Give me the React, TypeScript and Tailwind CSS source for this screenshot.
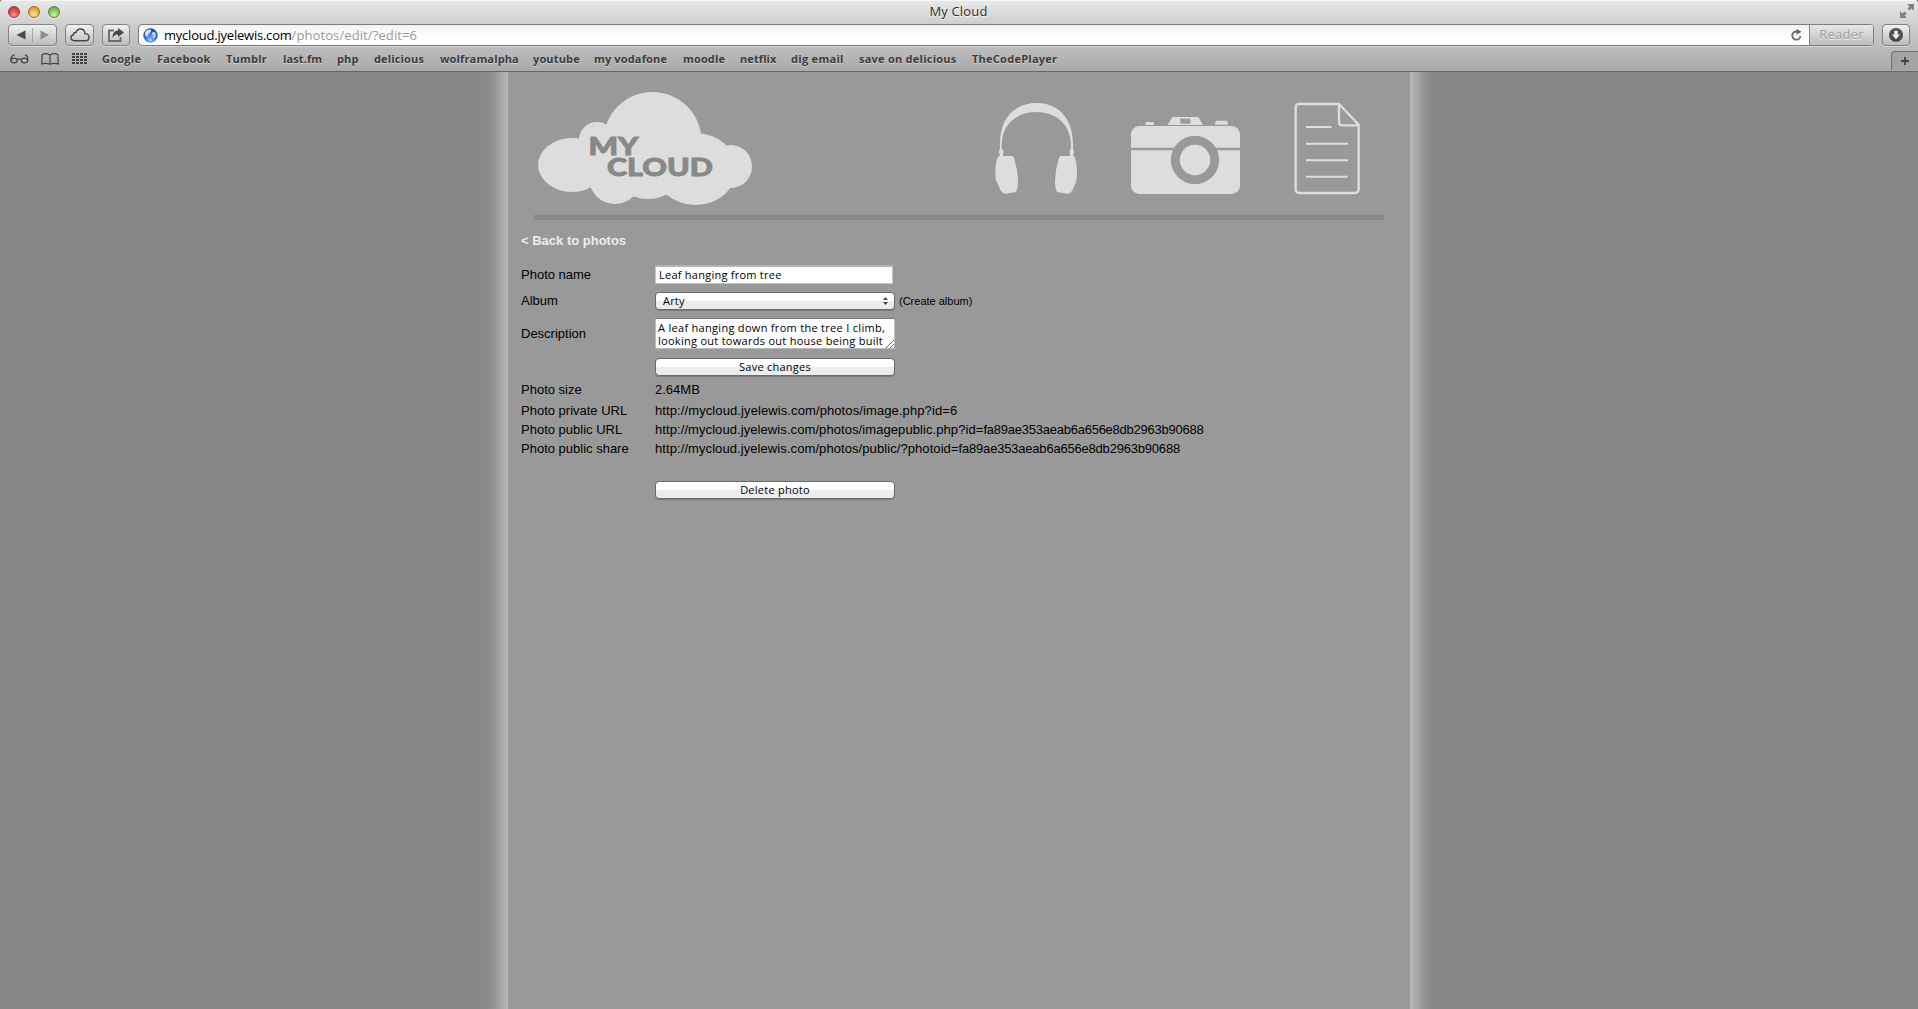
import type { ReactNode } from "react";

const ui = "font-['Open_Sans','Noto_Sans',sans-serif]";
const arial = "font-['Liberation_Sans',Arial,sans-serif]";
const toolButton =
  "flex h-[22px] items-center justify-center rounded-[4px] border border-[#858585] bg-linear-to-b from-[#f0f0f0] to-[#bcbcbc] shadow-[0_1px_0_#d4d4d4]";

const bookmarks: [string, string][] = [
  ["Google", "w-[39px] tracking-[0.25px]"],
  ["Facebook", "w-[53px] tracking-[0.15px]"],
  ["Tumblr", "w-[41px] tracking-[0.2px]"],
  ["last.fm", "w-[38px] tracking-[0.1px]"],
  ["php", "w-[21px] tracking-[0.15px]"],
  ["delicious", "w-[50px] tracking-[0.15px]"],
  ["wolframalpha", "w-[77px] tracking-[0.15px]"],
  ["youtube", "w-[45px] tracking-[0.15px]"],
  ["my vodafone", "w-[73px] tracking-[0.15px]"],
  ["moodle", "w-[41px] tracking-[0.15px]"],
  ["netflix", "w-[35px] tracking-[0.1px]"],
  ["dig email", "w-[52px] tracking-[0.3px]"],
  ["save on delicious", "w-[97px] tracking-[0.25px]"],
  ["TheCodePlayer", "w-[86px] tracking-[0.25px]"],
];

function Light({ color }: { color: string }) {
  return <span className={`h-3 w-3 rounded-full border shadow-[0_1px_0_#eee] ${color}`} />;
}

function TitleBar() {
  return (
    <div className="flex h-[24px] items-center pl-2 pr-[4px]">
      <div className="flex w-[60px] gap-2">
        <Light color="border-[#8f3c3a] bg-[radial-gradient(circle_at_50%_80%,#ff9a92,#e2443f_55%,#b83a38)]" />
        <Light color="border-[#94692b] bg-[radial-gradient(circle_at_50%_80%,#ffe79a,#f0b33f_55%,#bd8433)]" />
        <Light color="border-[#557f3a] bg-[radial-gradient(circle_at_50%_80%,#d0f5a6,#83c75a_55%,#5d9440)]" />
      </div>
      <div className="mb-[2px] flex-1 pr-[23px] text-center text-[13px] leading-[20px] text-[#2e2e2e] [text-shadow:0_1px_0_#f4f4f4]">
        <span className="tracking-[0.15px]">My Cloud</span>
      </div>
      <div className="w-[28px]" />
      <svg className="-mt-[2px] h-[14px] w-[14px]" viewBox="0 0 14 14" fill="#828282">
        <path d="M7 0h7v7l-2.4-2.4-2 2-2.2-2.2 2-2zM0 7l2.4 2.4 2-2 2.2 2.2-2 2L7 14H0z" />
      </svg>
    </div>
  );
}

function Globe() {
  return (
    <svg className="h-[15px] w-[15px]" viewBox="0 0 15 15">
      <defs>
        <radialGradient id="globe" cx="50%" cy="75%" r="70%">
          <stop offset="0" stopColor="#7dbcfa" />
          <stop offset="0.6" stopColor="#2f6cd2" />
          <stop offset="1" stopColor="#234a9f" />
        </radialGradient>
      </defs>
      <circle cx="7.5" cy="7.5" r="7.200" fill="url(#globe)" />
      <path d="M2.200 4.300C3.500 2 6 1.200 7.800 1.800L8.200 3.200 6.700 4.200 7 5.500 5.200 6 4.800 8 3.500 8.500 2 7z" fill="#d8e8fa" />
      <path d="M9.500 4l2.500.3 1 2.200-1 3-1.600 1.200-.8-2.200.5-1.200-1.500-1.300z" fill="#b5d5f8" />
      <path d="M5 11.500l2.500-.5 2 1.200-2 1z" fill="#b8ddff" />
    </svg>
  );
}

function AddressBar() {
  return (
    <div className="flex h-[22px] items-center pl-2 pr-2">
      <div className={`${toolButton} w-[49px]`}>
        <svg className="h-5 w-[47px]" viewBox="0 0 47 20">
          <path d="M16.500 5.500v9L7.500 10z" fill="#4a4a4a" />
          <path d="M31.500 5.500v9l8.500-4.500z" fill="#8c8c8c" />
          <path d="M23.500 3v14" stroke="#a6a6a6" />
        </svg>
      </div>
      <div className={`${toolButton} ml-2 w-[29px]`}>
        <svg className="h-[14px] w-5" viewBox="0 0 20 14" fill="none" stroke="#454545" strokeWidth="1.400">
          <path d="M4.500 12.700C2.500 12.700 1 11.300 1 9.600 1 8 2 7 3.500 6.700 3.300 5 4.500 4.200 6 4.500 6.700 2.300 8.300 1 10.300 1c2.700 0 4.500 2 4.600 4.600C17.300 5.700 19 7 19 9.200c0 2.100-1.500 3.500-3.500 3.500z" />
        </svg>
      </div>
      <div className={`${toolButton} ml-2 w-[28px]`}>
        <svg className="h-[14px] w-4" viewBox="0 0 16 14" fill="none">
          <path d="M6 2.500H1v10.500h11.500V9" stroke="#6a6a6a" strokeWidth="1.800" />
          <path d="M10 0l6 4.500-6 4.500V6.500C7.500 6.300 6 7.500 4.500 10 4.500 5.500 6.500 2.700 10 2.600z" fill="#484848" />
        </svg>
      </div>
      <div className="ml-2 flex h-[22px] flex-1 items-center rounded-[4px] border border-[#7c7c7c] bg-linear-to-b from-[#f2f2f2] to-white to-60% shadow-[0_1px_0_#d4d4d4]">
        <div className="flex flex-1 items-center pl-[4px]">
          <Globe />
          <span className="ml-[6px] text-[13px] leading-5 tracking-[-0.22px] text-black">mycloud.jyelewis.com</span>
          <span className="text-[13px] leading-5 tracking-[0.1px] text-[#9a9a9a]">/photos/edit/?edit=6</span>
        </div>
        <svg className="mr-[7px] h-3 w-[11px]" viewBox="0 0 11 12" fill="none">
          <path d="M6.500 2.500H5.200A4.100 4.100 0 1 0 9.400 7" stroke="#666" strokeWidth="1.800" />
          <path d="M5.500 0l5 2.700-5 3z" fill="#666" />
        </svg>
        <div className="flex h-5 w-[64px] items-center justify-center rounded-r-[3px] border-l border-[#858585] bg-linear-to-b from-[#e8e8e8] to-[#bcbcbc] text-[13px] tracking-[0.2px] text-[#a0a0a0] [text-shadow:0_1px_0_#eee]">
          Reader
        </div>
      </div>
      <div className={`${toolButton} ml-2 w-[28px]`}>
        <svg className="h-[14px] w-[14px]" viewBox="0 0 14 14">
          <circle cx="7" cy="7" r="7" fill="#4d4d4d" />
          <path d="M5.200 2.800h3.600v3.700h2.400L7 11.300 2.800 6.500h2.400z" fill="#eee" />
        </svg>
      </div>
    </div>
  );
}

function BookmarksBar() {
  return (
    <div className="flex h-[25px] items-start pl-[10px]">
      <svg className="mt-[8px] h-[10px] w-[19px]" viewBox="0 0 19 10" fill="none" stroke="#444" strokeWidth="1.300">
        <ellipse cx="4" cy="6.500" rx="3.200" ry="2.400" />
        <ellipse cx="14.500" cy="6.500" rx="3.200" ry="2.400" />
        <path d="M.8 6C.8 3 2.500 1 4.500 1M17.700 6C18 3 17 1 15 1M7 5.500q2.200-1.300 4.500 0" />
      </svg>
      <svg className="ml-[12px] mt-[7px] h-3 w-[18px]" viewBox="0 0 18 12" fill="none" stroke="#444" strokeWidth="1.200">
        <path d="M9 2Q5-.3 1.200 1.500L.7 11q4-1.500 8.300.3 4.300-1.800 8.300-.3L16.800 1.500Q13-.3 9 2zv9" />
      </svg>
      <svg className="ml-[13px] mt-[7px] h-[12px] w-[15px]" viewBox="0 0 15 12" fill="#444">
        {[0, 3, 6, 9].map((y) =>
          [0, 4, 8, 12].map((x) => <rect key={`${x}-${y}`} x={x} y={y} width="3" height="2" />)
        )}
      </svg>
      <div className="ml-[15px] mt-[4px] flex gap-4 text-[11px] font-bold leading-[18px] text-[#3c3c3c] [text-shadow:0_1px_0_#cfcfcf]">
        {bookmarks.map(([name, fit]) => (
          <span key={name} className={`whitespace-nowrap ${fit}`}>{name}</span>
        ))}
      </div>
      <div className="ml-auto mt-[5px] flex h-[19px] w-[27px] items-center justify-center rounded-tl-[4px] border-l border-t border-[#6e6e6e] bg-[#a3a3a3]">
        <svg className="h-2 w-2" viewBox="0 0 8 8" stroke="#444" strokeWidth="1.800">
          <path d="M4 0v8M0 4h8" />
        </svg>
      </div>
    </div>
  );
}

function Logo() {
  return (
    <svg className="h-[118px] w-[218px]" viewBox="536 90 218 118" fill="#ddd">
      <ellipse cx="572" cy="165" rx="34" ry="27" />
      <circle cx="597" cy="140" r="18" />
      <circle cx="652.500" cy="141" r="49" />
      <ellipse cx="695.500" cy="169" rx="41" ry="36" />
      <ellipse cx="731" cy="166.500" rx="21" ry="21.500" />
      <circle cx="615" cy="178" r="26" />
      <ellipse cx="648" cy="170" rx="35" ry="29" />
      <g fill="#888" stroke="#888" strokeWidth="0.900" fontFamily="Lato, sans-serif" fontWeight="900">
        <text x="588.500" y="155" fontSize="24" textLength="50" lengthAdjust="spacingAndGlyphs">MY</text>
        <text x="607" y="176" fontSize="25.500" textLength="106" lengthAdjust="spacingAndGlyphs">CLOUD</text>
      </g>
    </svg>
  );
}

function Headphones() {
  return (
    <svg className="h-[93px] w-[83px]" viewBox="105 66 249 279" fill="#ddd">
      <path d="M120 204C116 110 168 69 229 69s114 41 110 135l3 12-3 14h-8l-3-14 5-12C336 130 284 96 229 96s-107 34-104 108l6 12-3 14h-8l-3-14z" />
      <path d="M118 228l38 0q5 0 8 12 9 30 10 62 0 22-6 34l-18 3q-14 5-22 0-8-8-13-24-8-8-9-30 0-28 4-44 2-11 8-13z" />
      <path d="M341 228l-38 0q-5 0-8 12-9 30-10 62 0 22 6 34l18 3q14 5 22 0 8-8 13-24 6-8 7-30 0-28-4-44-2-11-6-13z" />
    </svg>
  );
}

function Camera() {
  return (
    <svg className="h-[79px] w-[111px]" viewBox="510 108 333 237" fill="#ddd">
      <path d="M557 135v-6q0-3 3-3h19q3 0 3 3v6zM764 134l4-12h33l4 12zM623 135l14-24h78l14 24z" />
      <rect x="661" y="116" width="30" height="15" fill="#999" />
      <rect x="513" y="138" width="327" height="204" rx="25" />
      <path d="M510 207h333" stroke="#999" strokeWidth="8" />
      <circle cx="705" cy="240" r="72.500" fill="#999" />
      <circle cx="705" cy="240" r="45.500" />
    </svg>
  );
}

function Document() {
  return (
    <svg className="h-[93px] w-[67px]" viewBox="1002 66 201 279" fill="none" stroke="#ddd" strokeWidth="7">
      <path d="M1137 72h-120q-10 0-10 10v246q0 11 10 11h169q10 0 10-11V134zv54q0 10 10 10h48" strokeLinejoin="round" />
      <path d="M1038 141h77M1038 191.500h126M1038 241h126M1038 290.500h125" strokeWidth="6" />
    </svg>
  );
}

function Row({ label, className, children }: { label: string; className: string; children: ReactNode }) {
  return (
    <div className={`flex items-center ${className}`}>
      <div className="w-[134px] shrink-0 tracking-normal">{label}</div>
      {children}
    </div>
  );
}

function PushButton({ children }: { children: ReactNode }) {
  return (
    <button
      className={`${ui} h-[18px] w-[240px] rounded-[4px] border border-[#6b6b6b] bg-linear-to-b from-white from-50% to-[#ececec] to-50% pb-px text-[11px] leading-[15px] tracking-[0.25px] text-black shadow-[0_1px_0_#7c7c7c]`}
    >
      {children}
    </button>
  );
}

function EditForm() {
  return (
    <main className={`${arial} pl-[13px] text-[13px] text-black`}>
      <a className="mt-[12px] block h-[18px] font-bold leading-[18px] text-[#eee]">&lt; Back to photos</a>
      <Row label="Photo name" className="mt-[15px] h-[19px]">
        <input
          className={`${ui} h-[19px] w-[238px] border border-[#c4c4c4] border-t-2 border-t-[#b4b4b4] bg-white pb-[2px] pl-[3px] text-[11px] leading-[14px] tracking-[0.25px] outline-none`}
          defaultValue="Leaf hanging from tree"
        />
      </Row>
      <Row label="Album" className="mt-[8px] h-[18px]">
        <div
          className={`${ui} flex h-[18px] w-[240px] items-center justify-between rounded-[4px] border border-[#6b6b6b] bg-linear-to-b from-white from-50% to-[#ececec] to-50% pl-[7px] pr-[6px] text-[11px] leading-[16px] tracking-[0.2px] shadow-[0_1px_0_#7c7c7c]`}
        >
          Arty
          <svg className="h-2 w-[5px]" viewBox="0 0 5 8" fill="#444">
            <path d="M0 3l2.500-3L5 3zM0 5h5L2.500 8z" />
          </svg>
        </div>
        <span className="ml-[4px] text-[11px]">(Create album)</span>
      </Row>
      <Row label="Description" className="mt-[8px] h-[31px]">
        <div className={`${ui} relative h-[31px] w-[240px] border border-[#bbb] border-t-[#777] bg-white pl-[2px] pt-[2px] text-[11px] leading-[13px]`}>
          <div className="whitespace-nowrap tracking-[0.3px]">A leaf hanging down from the tree I climb,</div>
          <div className="whitespace-nowrap tracking-[0.28px]">looking out towards out house being built</div>
          <svg className="absolute bottom-0 right-0 h-2 w-2" viewBox="0 0 8 8" stroke="#555" strokeWidth="0.900">
            <path d="M0 8l8-8M4 8l4-4" />
          </svg>
        </div>
      </Row>
      <Row label="" className="mt-[9px] h-[18px]">
        <PushButton>Save changes</PushButton>
      </Row>
      <Row label="Photo size" className="mt-[4px] h-[19px]">2.64MB</Row>
      <Row label="Photo private URL" className="mt-[2px] h-[19px] tracking-[0.1px]">
        http://mycloud.jyelewis.com/photos/image.php?id=6
      </Row>
      <Row label="Photo public URL" className="h-[19px]">
        <span>
          <span className="tracking-[0.08px]">http://mycloud.jyelewis.com/photos/imagepublic.php?id=</span>
          <span className="tracking-[-0.24px]">fa89ae353aeab6a656e8db2963b90688</span>
        </span>
      </Row>
      <Row label="Photo public share" className="h-[19px]">
        <span>
          <span className="tracking-[0.08px]">http://mycloud.jyelewis.com/photos/public/?photoid=</span>
          <span className="tracking-[-0.2px]">fa89ae353aeab6a656e8db2963b90688</span>
        </span>
      </Row>
      <Row label="" className="mt-[23px] h-[18px]">
        <PushButton>Delete photo</PushButton>
      </Row>
    </main>
  );
}

export default function App() {
  return (
    <div className={`${ui} flex h-[1009px] w-[1918px] flex-col overflow-hidden bg-[#888]`}>
      <div className="h-[72px] shrink-0 rounded-t-[4px] border-b border-[#666] bg-linear-to-b from-[#e9e9e9] via-[#cacaca] via-40% to-[#ababab] shadow-[inset_0_1px_0_#f6f6f6]">
        <TitleBar />
        <AddressBar />
        <BookmarksBar />
      </div>
      <div className="flex flex-1 justify-center">
        <div className="w-[22px] bg-linear-to-l from-[#bbb] via-[#9a9a9a] to-[#888]" />
        <div className="w-[902px] bg-[#999]">
          <header className="mx-[26px] flex h-[148px] items-start border-b-[5px] border-[#888] pl-[2px]">
            <div className="mt-[18px]"><Logo /></div>
            <nav className="ml-[241px] flex">
              <div className="mt-[30px] h-[93px] w-[135px]"><Headphones /></div>
              <div className="mt-[44px] h-[79px] w-[164px]"><Camera /></div>
              <div className="mt-[30px] h-[93px]"><Document /></div>
            </nav>
          </header>
          <EditForm />
        </div>
        <div className="w-[22px] bg-linear-to-r from-[#bbb] via-[#9a9a9a] to-[#888]" />
      </div>
    </div>
  );
}
